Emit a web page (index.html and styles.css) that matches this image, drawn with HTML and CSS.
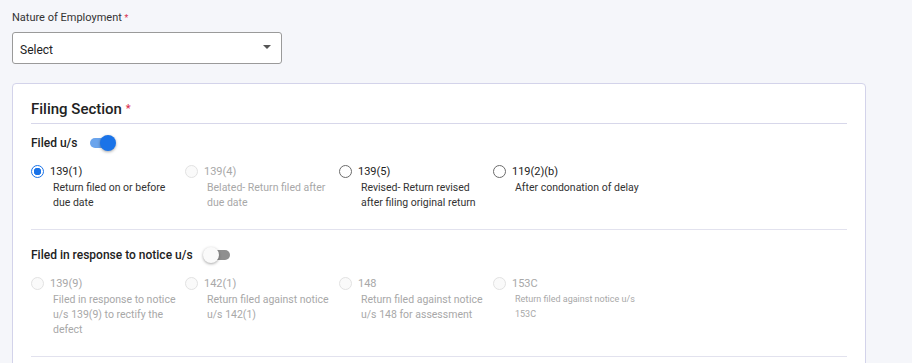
FILE: index.html
```html
<!DOCTYPE html>
<html lang="en">
<head>
  <meta charset="UTF-8">
  <title>Filing Details</title>
  <link rel="stylesheet" href="styles.css">
</head>
<body>
  <div class="field">
    <label class="field-label">Nature of Employment <span class="req">*</span></label>
    <div class="select">
      <span>Select</span>
      <span class="caret"></span>
    </div>
  </div>

  <div class="card">
    <h2 class="card-title">Filing Section <span class="req">*</span></h2>

    <div class="group">
      <div class="group-head">
        <span>Filed u/s</span>
        <span class="toggle on"><span class="knob"></span></span>
      </div>
      <div class="options">
        <div class="option">
          <div class="opt-top"><span class="radio checked"></span>139(1)</div>
          <div class="desc">Return filed on or before due date</div>
        </div>
        <div class="option disabled">
          <div class="opt-top"><span class="radio"></span>139(4)</div>
          <div class="desc">Belated- Return filed after due date</div>
        </div>
        <div class="option">
          <div class="opt-top"><span class="radio"></span>139(5)</div>
          <div class="desc">Revised- Return revised after filing original return</div>
        </div>
        <div class="option">
          <div class="opt-top"><span class="radio"></span>119(2)(b)</div>
          <div class="desc">After condonation of delay</div>
        </div>
      </div>
    </div>

    <div class="group">
      <div class="group-head">
        <span>Filed in response to notice u/s</span>
        <span class="toggle"><span class="knob"></span></span>
      </div>
      <div class="options">
        <div class="option disabled">
          <div class="opt-top"><span class="radio"></span>139(9)</div>
          <div class="desc">Filed in response to notice u/s 139(9) to rectify the defect</div>
        </div>
        <div class="option disabled">
          <div class="opt-top"><span class="radio"></span>142(1)</div>
          <div class="desc">Return filed against notice u/s 142(1)</div>
        </div>
        <div class="option disabled">
          <div class="opt-top"><span class="radio"></span>148</div>
          <div class="desc">Return filed against notice u/s 148 for assessment</div>
        </div>
        <div class="option disabled">
          <div class="opt-top"><span class="radio"></span>153C</div>
          <div class="desc small">Return filed against notice u/s 153C</div>
        </div>
      </div>
    </div>
  </div>
</body>
</html>
```

FILE: styles.css
```css
body {
  margin: 0;
  padding: 10px 12px 0;
  background: #f5f6fa;
  font-family: Roboto, "Liberation Sans", sans-serif;
  color: #212121;
  overflow: hidden;
}
.req {
  color: #d9304f;
  font-size: 0.8em;
}
.field-label {
  display: block;
  font-size: 11px;
  line-height: 16px;
  color: #333;
}
.select {
  box-sizing: border-box;
  width: 270px;
  height: 32px;
  margin-top: 6px;
  padding: 3px 10px 0 7px;
  display: flex;
  align-items: center;
  justify-content: space-between;
  background: white;
  border: 1px solid #9a9a9a;
  border-radius: 3px;
  font-size: 12px;
  color: #222;
}
.caret {
  width: 0;
  height: 0;
  border-left: 4px solid transparent;
  border-right: 4px solid transparent;
  border-top: 4px solid #555;
  margin-top: -6px;
}
.card {
  margin-top: 19px;
  width: 854px;
  box-sizing: border-box;
  background: white;
  border: 1px solid #d3d3ea;
  border-radius: 4px;
  padding: 15px 18px 40px;
}
.card-title {
  margin: 0;
  font-size: 15px;
  font-weight: 500;
  line-height: 20px;
  padding-bottom: 4px;
  border-bottom: 1px solid #d7d7ea;
  color: #222;
}
.card-title .req {
  font-size: 11px;
  vertical-align: top;
}
.group {
  padding: 9px 0 19px;
  border-bottom: 1px solid #e2e2ee;
}
.group + .group {
  padding-top: 15px;
}
.group-head {
  display: flex;
  align-items: center;
  gap: 13px;
  font-size: 12px;
  font-weight: 500;
  line-height: 20px;
  color: #222;
}
.toggle {
  position: relative;
  width: 24px;
  height: 10px;
  border-radius: 5px;
  background: #8f8f8f;
}
.toggle .knob {
  position: absolute;
  top: -3px;
  left: -3px;
  width: 16px;
  height: 16px;
  border-radius: 50%;
  background: #fafafa;
  box-shadow: 0 1px 3px rgba(0,0,0,0.35);
}
.toggle.on {
  background: #6aa4ec;
}
.toggle.on .knob {
  left: 10px;
  background: #1a73e8;
}
.options {
  display: grid;
  grid-template-columns: repeat(4, 154px);
  margin-top: 11px;
}
.option {
  font-size: 10.5px;
  line-height: 15px;
  color: #222;
}
.opt-top {
  display: flex;
  align-items: center;
  gap: 6px;
  font-size: 11px;
}
.radio {
  box-sizing: border-box;
  width: 13px;
  height: 13px;
  border-radius: 50%;
  border: 1px solid #6b6b6b;
  background: white;
}
.radio.checked {
  border-color: #1a73e8;
  background: radial-gradient(circle, #1a73e8 0 3.5px, white 4px);
}
.desc {
  padding-left: 22px;
  margin-top: 1px;
  color: #333;
}
.option.disabled,
.option.disabled .desc {
  color: #a8a8a8;
}
.option.disabled .radio {
  border-color: #e2e2e2;
  background: #fafafa;
}
.desc.small {
  font-size: 9px;
  line-height: 15px;
}
```
